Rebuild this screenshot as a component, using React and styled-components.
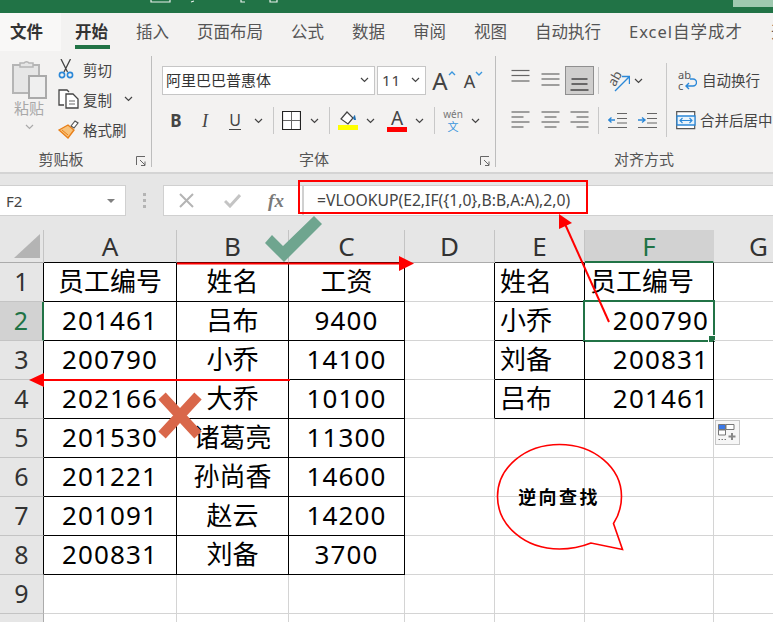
import React from "react";
import styled, { createGlobalStyle } from "styled-components";

const UI_FONT = `"Noto Sans", "Noto Sans CJK SC", sans-serif`;
const GREEN = "#217346";

const GlobalStyle = createGlobalStyle`
  html, body { margin: 0; padding: 0; background: #fff; }
  * { box-sizing: border-box; }
`;

const Page = styled.div`
  position: relative;
  width: 773px;
  height: 622px;
  overflow: hidden;
  font-family: ${UI_FONT};
  background: #fff;
`;

const TitleBar = styled.div`
  height: 13px;
  background: ${GREEN};
  display: flex;
  justify-content: flex-end;
`;

const TitlePatch = styled.div`
  width: 40px;
  height: 7px;
  background: #9fc9b0;
`;

const TitleMarks = styled.svg`
  flex: 1;
  height: 4px;
`;

const TabRow = styled.div`
  height: 38px;
  background: #f3f2f1;
  display: flex;
  gap: 28px;
  white-space: nowrap;
`;

const FileTab = styled.div`
  width: 61px;
  flex: none;
  margin-right: -14px;
  background: #f9f8f7;
  padding-left: 10px;
  font-size: 16.5px;
  font-weight: 700;
  line-height: 37px;
  color: #333;
`;

const Tab = styled.div`
  position: relative;
  flex: none;
  font-size: 16.5px;
  line-height: 37px;
  letter-spacing: ${(p) => (p.$wide ? "1px" : "0")};
  color: ${(p) => (p.$active ? "#333" : "#555")};
  font-weight: ${(p) => (p.$active ? 700 : 400)};
  &::after {
    content: "";
    display: ${(p) => (p.$active ? "block" : "none")};
    position: absolute;
    left: 0;
    right: -2px;
    top: 32px;
    height: 4px;
    background: ${GREEN};
  }
`;

const Ribbon = styled.div`
  height: 123px;
  background: #f3f2f1;
  border-bottom: 2px solid #d4d4d4;
  display: flex;
  padding-top: 5px;
  overflow: hidden;
  white-space: nowrap;
`;

const Group = styled.div`
  width: ${(p) => p.$w}px;
  flex: none;
  height: 111px;
  display: flex;
  flex-direction: column;
  border-right: ${(p) => (p.$last ? "none" : "1px solid #bdbdbd")};
  padding-left: ${(p) => p.$pl || 0}px;
`;

const GroupBody = styled.div`
  flex: 1;
  display: flex;
  flex-direction: ${(p) => p.$dir || "column"};
  padding-top: ${(p) => p.$pt || 0}px;
`;

const GroupFoot = styled.div`
  height: 16px;
  display: flex;
  align-items: center;
  margin-right: ${(p) => p.$mr || 0}px;
`;

const GroupLabel = styled.div`
  flex: 1;
  text-align: center;
  font-size: 15px;
  line-height: 16px;
  color: #555;
  padding-right: ${(p) => p.$pr || 0}px;
`;

const Launcher = styled.svg`
  width: 10px;
  height: 10px;
  margin-top: 4px;
  flex: none;
`;

const PasteColumn = styled.div`
  width: 58px;
  flex: none;
  display: flex;
  flex-direction: column;
  align-items: center;
  padding-top: 4px;
`;

const PasteLabel = styled.div`
  font-size: 15px;
  line-height: 20px;
  margin-top: -2px;
  margin-bottom: 6px;
  color: #a8a8a8;
`;

const ClipList = styled.div`
  display: flex;
  flex-direction: column;
  margin-top: -2px;
`;

const ClipRow = styled.div`
  height: 30px;
  display: flex;
  align-items: center;
  font-size: 14.5px;
  color: #444;
`;

const ClipIcon = styled.div`
  width: 25px;
  flex: none;
  display: flex;
  align-items: center;
`;

const ToolRow = styled.div`
  height: 29px;
  display: flex;
  align-items: center;
  margin-bottom: 11px;
`;

const SelectBox = styled.div`
  width: ${(p) => p.$w}px;
  height: 29px;
  margin-right: 2px;
  background: #fff;
  border: 1px solid #c6c6c6;
  display: flex;
  align-items: center;
  justify-content: space-between;
  padding: 0 5px 2px 3px;
  font-size: 15px;
  color: #333;
`;

const SizeText = styled.span`
  padding-left: 1px;
  letter-spacing: 1px;
  color: #444;
`;

const Slot = styled.div`
  width: ${(p) => p.$w}px;
  height: 29px;
  flex: none;
  display: flex;
  align-items: center;
  justify-content: center;
  color: #444;
  background: ${(p) => (p.$on ? "#cfcecd" : "transparent")};
  border: ${(p) => (p.$on ? "1px solid #8f8f8f" : "none")};
`;

const BoldMark = styled.span`
  font-size: 17px;
  line-height: 24px;
  font-weight: 700;
`;

const ItalicMark = styled.span`
  font-size: 18px;
  line-height: 24px;
  font-style: italic;
  font-family: "Liberation Serif", serif;
`;

const UnderMark = styled.span`
  font-size: 16px;
  line-height: 18px;
  border-bottom: 1px solid #444;
`;

const GrowLetter = styled.span`
  font-size: ${(p) => p.$s}px;
  color: #444;
  line-height: 1;
`;

const GrowSvg = styled.svg`
  width: 8px;
  height: 5px;
  margin-bottom: 15px;
  flex: none;
`;

const Divider = styled.div`
  width: 1px;
  height: 27px;
  flex: none;
  background: #c8c8c8;
  margin-left: ${(p) => p.$ml}px;
  margin-right: ${(p) => p.$mr}px;
`;

const ColorLetter = styled.div`
  display: flex;
  flex-direction: column;
  align-items: center;
  width: 20px;
  font-size: 19px;
  line-height: 18px;
  color: #444;
`;

const ColorBar = styled.div`
  width: 20px;
  height: 5px;
  background: ${(p) => p.$c};
`;

const PhoneticMark = styled.div`
  display: flex;
  flex-direction: column;
  align-items: center;
  font-size: 10px;
  line-height: 12px;
  color: #777;
`;

const PhoneticGlyph = styled.span`
  font-size: 11px;
  line-height: 13px;
  color: #3a96dd;
`;

const AlignLeft = styled.div`
  width: 161px;
  flex: none;
  height: 74px;
  margin-top: -3px;
  padding-top: 3px;
  border-right: 1px solid #c8c8c8;
`;

const AlignRight = styled.div`
  padding-left: 9px;
`;

const WideText = styled.span`
  font-size: 14.5px;
  color: #444;
  margin-left: 4px;
  padding-bottom: 2px;
`;

const FormulaBar = styled.div`
  height: 56px;
  background: #e6e6e6;
  display: flex;
  padding-top: 11px;
`;

const NameBox = styled.div`
  width: 126px;
  height: 31px;
  background: #fff;
  border: 1px solid #d0d0d0;
  border-left: none;
  display: flex;
  align-items: center;
  justify-content: space-between;
  padding: 0 10px 0 6px;
  font-size: 15px;
  color: #444;
`;

const NameCaret = styled.div`
  width: 0;
  height: 0;
  border: 4px solid transparent;
  border-top: 4px solid #808080;
  border-bottom: none;
`;

const GripDots = styled.div`
  width: 37px;
  display: flex;
  flex-direction: column;
  align-items: center;
  justify-content: center;
  gap: 3px;
  height: 31px;
`;

const GripDot = styled.div`
  width: 3px;
  height: 3px;
  background: #b4b4b4;
`;

const ActionBox = styled.div`
  width: 140px;
  height: 31px;
  background: #fff;
  border: 1px solid #d0d0d0;
  display: flex;
  align-items: center;
`;

const FxSlot = styled.div`
  width: ${(p) => p.$w}px;
  flex: none;
  display: flex;
  justify-content: center;
  align-items: center;
`;

const FxMark = styled.span`
  font-family: "Liberation Serif", serif;
  font-style: italic;
  font-weight: 700;
  font-size: 19px;
  color: #7a7a7a;
`;

const FormulaInput = styled.div`
  flex: 1;
  height: 31px;
  background: #fff;
  border: 1px solid #d0d0d0;
  border-right: none;
  padding-left: 13px;
  font-size: 15.7px;
  line-height: 29px;
  color: #444;
`;

const Sheet = styled.div`
  display: grid;
  grid-template-columns: 44px 133px 112px 116px 90px 90px 129px 90px;
  grid-template-rows: 33px repeat(10, 39px);
`;

const Corner = styled.div`
  background: #e6e6e6;
  border-right: 1px solid #c4c4c4;
  border-bottom: 1px solid #ababab;
  position: relative;
  &::after {
    content: "";
    position: absolute;
    right: 3px;
    bottom: 4px;
    width: 26px;
    height: 24px;
    background: #b4b4b4;
    clip-path: polygon(100% 0, 100% 100%, 0 100%);
  }
`;

const ColHead = styled.div`
  background: ${(p) => (p.$on ? "#d2d2d2" : "#e6e6e6")};
  color: ${(p) => (p.$on ? GREEN : "#333")};
  border-right: 1px solid ${(p) => (p.$on ? "#d2d2d2" : "#c4c4c4")};
  border-bottom: ${(p) =>
    p.$on ? `2px solid ${GREEN}` : `1px solid ${p.$dark ? "#000" : "#ababab"}`};
  font-size: 26px;
  line-height: 32px;
  text-align: center;
`;

const RowHead = styled.div`
  background: ${(p) => (p.$on ? "#d2d2d2" : "#e6e6e6")};
  color: ${(p) => (p.$on ? GREEN : "#333")};
  border-right: ${(p) =>
    p.$on ? `2px solid ${GREEN}` : `1px solid ${p.$dark ? "#000" : "#ababab"}`};
  border-bottom: 1px solid #c4c4c4;
  font-size: 25px;
  line-height: 37px;
  text-align: center;
`;

const Cell = styled.div`
  position: relative;
  border-right: 1px solid ${(p) => (p.$box || p.$edge ? "#000" : "#d4d4d4")};
  border-bottom: 1px solid ${(p) => (p.$box ? "#000" : "#d4d4d4")};
  font-size: 26px;
  line-height: 36px;
  color: #000;
  text-align: ${(p) => p.$align || "center"};
  padding: ${(p) =>
    p.$align === "left" ? "0 0 0 5px" : p.$align === "right" ? "0 4px 0 0" : "0"};
  letter-spacing: ${(p) => (p.$num ? "1.15px" : "0")};
  white-space: nowrap;
  &::before {
    content: "";
    display: ${(p) => (p.$on ? "block" : "none")};
    position: absolute;
    left: -2px;
    top: -2px;
    right: -2px;
    bottom: -2px;
    border: 2px solid ${GREEN};
  }
  &::after {
    content: "";
    display: ${(p) => (p.$on ? "block" : "none")};
    position: absolute;
    right: -3px;
    bottom: -3px;
    width: 6px;
    height: 6px;
    background: ${GREEN};
    border: 1px solid #fff;
  }
`;

const Overlay = styled.svg`
  position: absolute;
  left: 0;
  top: 0;
  width: 773px;
  height: 622px;
  pointer-events: none;
`;

const FormulaHighlight = styled.div`
  position: absolute;
  left: 298px;
  top: 180px;
  width: 290px;
  height: 34px;
  border: 2px solid #f00;
`;

const PasteOptions = styled.div`
  position: absolute;
  left: 715px;
  top: 420px;
  width: 25px;
  height: 25px;
  background: #f6f6f6;
  border: 1px solid #c6c6c6;
  display: flex;
  align-items: center;
  justify-content: center;
`;

const CalloutText = styled.div`
  position: absolute;
  left: 497px;
  top: 485px;
  width: 124px;
  text-align: center;
  font-size: 18px;
  line-height: 24px;
  font-weight: 700;
  color: #000;
  letter-spacing: 2.4px;
`;

const Chevron = ({ c = "#444" }) => (
  <svg width="9" height="6" viewBox="0 0 9 6">
    <path d="M1 1l3.5 3.5L8 1" fill="none" stroke={c} strokeWidth="1.2" />
  </svg>
);

const LauncherIcon = () => (
  <Launcher viewBox="0 0 10 10">
    <path d="M.5 9V.5H9M4 4l5 5M9 5.5V9.500H5" fill="none" stroke="#666" strokeWidth="1" />
  </Launcher>
);

const PasteIcon = () => (
  <svg width="36" height="40" viewBox="0 0 36 40">
    <path d="M2 5h26v28H2z" fill="#e6e6e6" stroke="#b5b5b5" strokeWidth="2" />
    <path d="M9 6V3h4a3 3 0 0 1 5 0h4v4H9z" fill="#e6e6e6" stroke="#b5b5b5" strokeWidth="1.5" />
    <path d="M18 16h17v22H18z" fill="#efefef" stroke="#aaa" strokeWidth="2" />
  </svg>
);

const ScissorsIcon = () => (
  <svg width="16" height="20" viewBox="0 0 16 20">
    <path d="M3 0l6.5 13M12.500 0L6 13" fill="none" stroke="#444" strokeWidth="1.3" />
    <circle cx="4" cy="16" r="2.6" fill="none" stroke="#2b88d8" strokeWidth="1.6" />
    <circle cx="12" cy="16" r="2.6" fill="none" stroke="#2b88d8" strokeWidth="1.6" />
  </svg>
);

const CopyIcon = () => (
  <svg width="21" height="20" viewBox="0 0 21 20">
    <path d="M6 16H1V1h8l2 2" fill="#fff" stroke="#444" strokeWidth="1.3" />
    <path d="M8 5h7l5 5v9H8z" fill="#fff" stroke="#444" strokeWidth="1.3" />
    <path d="M11 12h6M11 15h6" stroke="#666" strokeWidth="1" />
  </svg>
);

const BrushIcon = () => (
  <svg width="21" height="19" viewBox="0 0 21 19">
    <path d="M13 6l4-5 3 2-4 5z" fill="#fff" stroke="#555" strokeWidth="1.2" />
    <path d="M1 10l9-5 6 5-6 8z" fill="#f8c27a" stroke="#e8801a" strokeWidth="1.4" />
    <path d="M4 10l6 5" stroke="#e8801a" strokeWidth="1" />
  </svg>
);

const GrowMark = ({ up }) => (
  <GrowSvg viewBox="0 0 8 5">
    <path d={up ? "M1 4l3-3 3 3" : "M1 1l3 3 3-3"} fill="none" stroke="#3a96dd" strokeWidth="1.4" />
  </GrowSvg>
);

const BorderIcon = () => (
  <svg width="19" height="19" viewBox="0 0 19 19">
    <path d="M.5.5h18v18H.5z" fill="#fff" stroke="#222" strokeWidth="1.2" />
    <path d="M9.5 1v17M1 9.5h17" stroke="#666" strokeWidth="1" />
  </svg>
);

const FillIcon = () => (
  <svg width="20" height="21" viewBox="0 0 20 21">
    <path d="M3 9l6-7 6 6-5 6z" fill="#fff" stroke="#444" strokeWidth="1.2" />
    <path d="M15 8c1-3 2-3 2-3l1 5h-2z" fill="#1f6fb2" />
    <path d="M0 15h20v5H0z" fill="#ff0" />
  </svg>
);

// y is measured from the top of the 29px slot
const LinesIcon = ({ y, w = [18, 18, 18, 18], dark, side = "center" }) => (
  <svg width="19" height="29" viewBox="0 0 19 29">
    {y.map((v, i) => {
      const left = side === "left" ? 0.5 : side === "right" ? 18.5 - w[i] : (19 - w[i]) / 2;
      return (
        <path
          key={v}
          d={`M${left} ${v}h${w[i]}`}
          stroke={dark ? "#222" : "#666"}
          strokeWidth="1.2"
        />
      );
    })}
  </svg>
);

const OrientIcon = () => (
  <svg width="22" height="24" viewBox="0 0 22 24">
    <path d="M7 22L21 8M14 7.500h7.500V15" fill="none" stroke="#2b88d8" strokeWidth="1.4" />
    <text x="1" y="16" fontSize="13" fill="#555" transform="rotate(-60 6 12)">ab</text>
  </svg>
);

const IndentIcon = ({ right }) => (
  <svg width="19" height="17" viewBox="0 0 19 17">
    <path d="M9 1.500h10M9 6.500h10M9 11h10M0 15.500h19" stroke="#666" strokeWidth="1.2" />
    <path
      d={right ? "M0 8h6M4 5.500L7 8l-3 2.500" : "M7 8H1M3.500 5.500L.7 8l2.800 2.500"}
      fill="none"
      stroke="#2b88d8"
      strokeWidth="1.4"
    />
  </svg>
);

const WrapIcon = () => (
  <svg width="20" height="21" viewBox="0 0 20 21">
    <text x="1" y="9" fontSize="11" fill="#555">ab</text>
    <text x="1" y="20" fontSize="11" fill="#555">c</text>
    <path d="M13 9h3a3.500 3.500 0 0 1 0 7H9M12 13l-3 3 3 3" fill="none" stroke="#2b88d8" strokeWidth="1.4" />
  </svg>
);

const MergeIcon = () => (
  <svg width="20" height="19" viewBox="0 0 20 19">
    <path d="M.7.7h18v17H.7z" fill="#fff" stroke="#555" strokeWidth="1.2" />
    <path d="M1 5h18v9H1z" fill="#e8f3fb" stroke="#2b88d8" strokeWidth="1.3" />
    <path d="M4 9.500h12M6.500 7L4 9.500 6.500 12M13.500 7L16 9.500 13.500 12" fill="none" stroke="#2b88d8" strokeWidth="1.1" />
  </svg>
);

const CrossIcon = () => (
  <svg width="17" height="17" viewBox="0 0 17 17">
    <path d="M2 2l13 13M15 2L2 15" stroke="#b4b4b4" strokeWidth="2" />
  </svg>
);

const TickIcon = () => (
  <svg width="17" height="15" viewBox="0 0 17 15">
    <path d="M1 8l5 5L16 2" fill="none" stroke="#c4c4c4" strokeWidth="3" />
  </svg>
);

const PasteOptionsIcon = () => (
  <svg width="19" height="17" viewBox="0 0 19 17">
    <path d="M.5.500h7v5h-7z" fill="#3b78e7" stroke="#777" />
    <path d="M8 .500h8v5H8zM.500 6h7v5h-7z" fill="#fff" stroke="#777" />
    <path d="M.500 15.500h8" stroke="#777" strokeDasharray="1.500 1.500" />
    <path d="M14 9v7M10.500 12.500h7" stroke="#888" strokeWidth="2" />
  </svg>
);

const COLS = ["A", "B", "C", "D", "E", "F", "G"];

const STAFF = [
  ["员工编号", "姓名", "工资"],
  ["201461", "吕布", "9400"],
  ["200790", "小乔", "14100"],
  ["202166", "大乔", "10100"],
  ["201530", "诸葛亮", "11300"],
  ["201221", "孙尚香", "14600"],
  ["201091", "赵云", "14200"],
  ["200831", "刘备", "3700"],
];

const LOOKUP = [
  ["姓名", "员工编号"],
  ["小乔", "200790"],
  ["刘备", "200831"],
  ["吕布", "201461"],
];

const TABS = ["插入", "页面布局", "公式", "数据", "审阅", "视图", "自动执行", "Excel自学成才", "开发工具"];

const App = () => {
  const rows = Array.from({ length: 10 }, (_, i) => i);

  return (
    <Page>
      <GlobalStyle />
      <TitleBar>
        <TitleMarks viewBox="0 0 733 4">
          <path d="M151 0v2h19V0M194 1l-3 1M241 0v2h4M270 0v2h7V0" fill="none" stroke="#fff" strokeWidth="1.200" opacity="0.9" />
        </TitleMarks>
        <TitlePatch />
      </TitleBar>
      <TabRow>
        <FileTab>文件</FileTab>
        <Tab $active>开始</Tab>
        {TABS.map((t) => (
          <Tab key={t} $wide={t.startsWith("Excel")}>{t}</Tab>
        ))}
      </TabRow>

      <Ribbon>
        <Group $w={152}>
          <GroupBody $dir="row">
            <PasteColumn>
              <PasteIcon />
              <PasteLabel>粘贴</PasteLabel>
              <Chevron c="#aaa" />
            </PasteColumn>
            <ClipList>
              <ClipRow>
                <ClipIcon><ScissorsIcon /></ClipIcon>
                剪切
              </ClipRow>
              <ClipRow>
                <ClipIcon><CopyIcon /></ClipIcon>
                复制
                <Slot $w={32}><Chevron /></Slot>
              </ClipRow>
              <ClipRow>
                <ClipIcon><BrushIcon /></ClipIcon>
                格式刷
              </ClipRow>
            </ClipList>
          </GroupBody>
          <GroupFoot $mr={5}>
            <GroupLabel $pr={14}>剪贴板</GroupLabel>
            <LauncherIcon />
          </GroupFoot>
        </Group>

        <Group $w={344} $pl={10}>
          <GroupBody $pt={10}>
            <ToolRow>
              <SelectBox $w={213}>
                阿里巴巴普惠体
                <Chevron />
              </SelectBox>
              <SelectBox $w={49}>
                <SizeText>11</SizeText>
                <Chevron />
              </SelectBox>
              <Slot $w={32}>
                <GrowLetter $s={24}>A</GrowLetter>
                <GrowMark up />
              </Slot>
              <Slot $w={27}>
                <GrowLetter $s={18}>A</GrowLetter>
                <GrowMark />
              </Slot>
            </ToolRow>
            <ToolRow>
              <Slot $w={28}><BoldMark>B</BoldMark></Slot>
              <Slot $w={30}><ItalicMark>I</ItalicMark></Slot>
              <Slot $w={30}><UnderMark>U</UnderMark></Slot>
              <Slot $w={16}><Chevron /></Slot>
              <Divider $ml={7} $mr={7} />
              <Slot $w={20}><BorderIcon /></Slot>
              <Slot $w={26}><Chevron /></Slot>
              <Divider $ml={2} $mr={7} />
              <Slot $w={22}><FillIcon /></Slot>
              <Slot $w={22}><Chevron /></Slot>
              <Slot $w={32}>
                <ColorLetter>
                  A
                  <ColorBar $c="#f00" />
                </ColorLetter>
              </Slot>
              <Slot $w={12}><Chevron /></Slot>
              <Divider $ml={9} $mr={6} />
              <Slot $w={24}>
                <PhoneticMark>
                  wén
                  <PhoneticGlyph>文</PhoneticGlyph>
                </PhoneticMark>
              </Slot>
              <Slot $w={20}><Chevron /></Slot>
            </ToolRow>
          </GroupBody>
          <GroupFoot $mr={5}>
            <GroupLabel $pr={14}>字体</GroupLabel>
            <LauncherIcon />
          </GroupFoot>
        </Group>

        <Group $w={286} $pl={10} $last>
          <GroupBody $dir="row" $pt={10}>
            <AlignLeft>
              <ToolRow>
                <Slot $w={29}><LinesIcon y={[4.5, 9.5, 15]} /></Slot>
                <Slot $w={30}><LinesIcon y={[8, 13, 19]} /></Slot>
                <Slot $w={29} $on><LinesIcon y={[13, 18, 24]} w={[16, 16, 18]} dark /></Slot>
                <Divider $ml={4} $mr={8} />
                <Slot $w={24}><OrientIcon /></Slot>
                <Slot $w={14}><Chevron /></Slot>
              </ToolRow>
              <ToolRow>
                <Slot $w={29}><LinesIcon y={[6, 11, 16, 21]} w={[18, 12, 18, 12]} side="left" /></Slot>
                <Slot $w={30}><LinesIcon y={[6, 11, 16, 21]} w={[18, 12, 18, 12]} /></Slot>
                <Slot $w={29}><LinesIcon y={[6, 11, 16, 21]} w={[18, 12, 18, 12]} side="right" /></Slot>
                <Divider $ml={4} $mr={9} />
                <Slot $w={19}><IndentIcon /></Slot>
                <Slot $w={11} />
                <Slot $w={19}><IndentIcon right /></Slot>
              </ToolRow>
            </AlignLeft>
            <AlignRight>
              <ToolRow>
                <Slot $w={22}><WrapIcon /></Slot>
                <WideText>自动换行</WideText>
              </ToolRow>
              <ToolRow>
                <Slot $w={20}><MergeIcon /></Slot>
                <WideText>合并后居中</WideText>
              </ToolRow>
            </AlignRight>
          </GroupBody>
          <GroupFoot>
            <GroupLabel>对齐方式</GroupLabel>
          </GroupFoot>
        </Group>
      </Ribbon>

      <FormulaBar>
        <NameBox>
          F2
          <NameCaret />
        </NameBox>
        <GripDots>
          <GripDot />
          <GripDot />
          <GripDot />
        </GripDots>
        <ActionBox>
          <FxSlot $w={45}><CrossIcon /></FxSlot>
          <FxSlot $w={46}><TickIcon /></FxSlot>
          <FxSlot $w={42}><FxMark>fx</FxMark></FxSlot>
        </ActionBox>
        <FormulaInput>=VLOOKUP(E2,IF(&#123;1,0&#125;,B:B,A:A),2,0)</FormulaInput>
      </FormulaBar>

      <Sheet>
        <Corner />
        {COLS.map((c, i) => (
          <ColHead key={c} $on={c === "F"} $dark={i < 3 || c === "E"}>
            {c}
          </ColHead>
        ))}
        {rows.map((r) => {
          const staff = STAFF[r];
          const lookup = LOOKUP[r];
          return (
            <React.Fragment key={r}>
              <RowHead $on={r === 1} $dark={r < 8}>{r + 1}</RowHead>
              <Cell $box={!!staff} $num={r > 0}>{staff && staff[0]}</Cell>
              <Cell $box={!!staff}>{staff && staff[1]}</Cell>
              <Cell $box={!!staff} $num={r > 0}>{staff && staff[2]}</Cell>
              <Cell $edge={!!lookup} />
              <Cell $box={!!lookup} $align="left">{lookup && lookup[0]}</Cell>
              <Cell
                $box={!!lookup}
                $on={r === 1}
                $num={r > 0}
                $align={r === 0 ? "left" : "right"}
              >
                {lookup && lookup[1]}
              </Cell>
              <Cell />
            </React.Fragment>
          );
        })}
      </Sheet>

      <FormulaHighlight />
      <PasteOptions><PasteOptionsIcon /></PasteOptions>

      <Overlay viewBox="0 0 773 622">
        <polygon
          points="265,243 272,235 283,246 314,216 322,224 284,262"
          fill="#6fa58f"
        />
        <path d="M177 263.500H401" stroke="#f00" strokeWidth="2" />
        <polygon points="399,256 414,263.500 399,271" fill="#f00" />
        <path d="M290 380H42" stroke="#f00" strokeWidth="2" />
        <polygon points="44,373 29,380 44,387" fill="#f00" />
        <path d="M609 322L565 224" stroke="#f00" strokeWidth="2" />
        <polygon points="559,214 559,229 572,223" fill="#f00" />
        <path
          d="M162 396L198 435M198 396L162 435"
          stroke="#d9674a"
          strokeWidth="10"
        />
        <path
          d="M613.500 523.500C619 515 621.500 506 621.500 496.500C621.500 467.500 594 444.500 559.500 444.500C525 444.500 497.500 467.500 497.500 496.500C497.500 525.500 525 549 559.500 549C571 549 581 547 591 543L622.500 549.500Z"
          fill="none"
          stroke="#f00"
          strokeWidth="1.600"
        />
      </Overlay>
      <CalloutText>逆向查找</CalloutText>
    </Page>
  );
};

export default App;
